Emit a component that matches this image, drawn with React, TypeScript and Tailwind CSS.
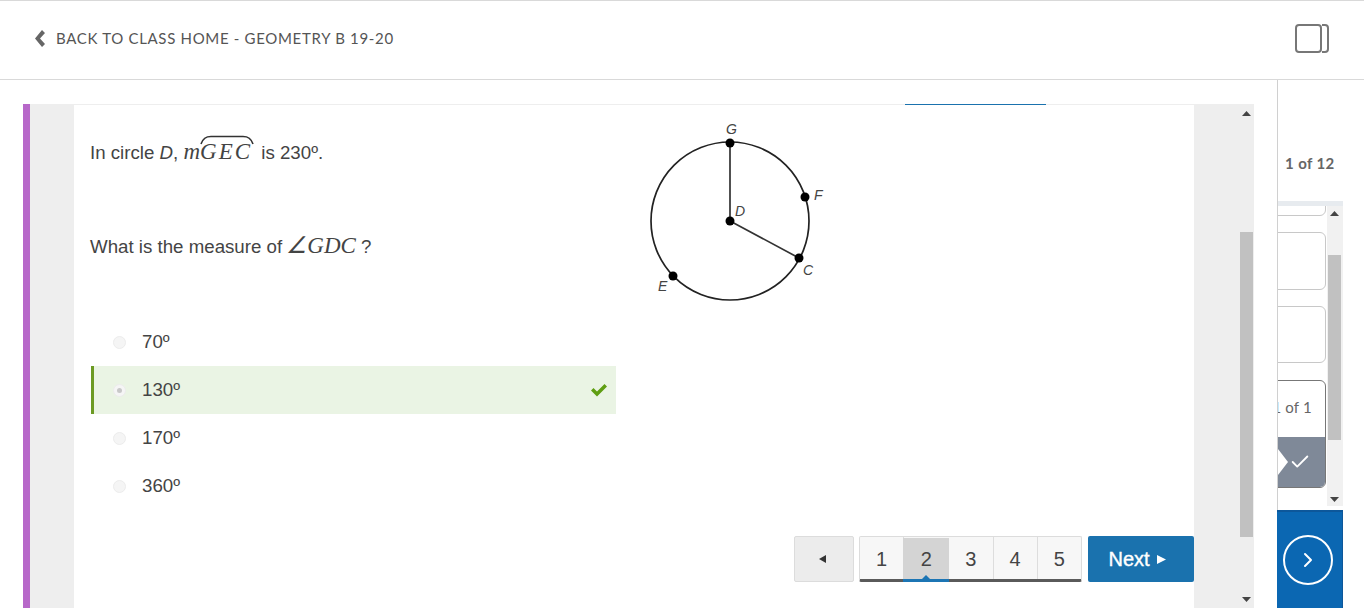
import { Check, ChevronRight } from 'lucide-react';
import React from 'react';

const options = [
  { label: '70º', correct: false },
  { label: '130º', correct: true },
  { label: '170º', correct: false },
  { label: '360º', correct: false },
];

const pages = ['1', '2', '3', '4', '5'];

function Figure() {
  return (
    <svg width="210" height="210" viewBox="0 0 210 210" className="shrink-0">
      <circle cx="100" cy="121" r="79" fill="none" stroke="#222" strokeWidth="1.7" />
      <path d="M100 43V121L169 158" fill="none" stroke="#333" strokeWidth="1.7" />
      <circle cx="100" cy="43" r="4.5" fill="#000" />
      <circle cx="175" cy="97" r="4.5" fill="#000" />
      <circle cx="100" cy="121" r="4.5" fill="#000" />
      <circle cx="169" cy="158" r="4.5" fill="#000" />
      <circle cx="43" cy="176" r="4.5" fill="#000" />
      <g fontFamily="Liberation Sans" fontStyle="italic" fontSize="14" fill="#444">
        <text x="96" y="34">G</text>
        <text x="184" y="100">F</text>
        <text x="105" y="116">D</text>
        <text x="173" y="175">C</text>
        <text x="28" y="191">E</text>
      </g>
    </svg>
  );
}

function ScrollArrow({ up }: { up?: boolean }) {
  return (
    <svg width="9" height="5" viewBox="0 0 9 5">
      <path d={up ? 'M4.5 0L9 5H0Z' : 'M0 0H9L4.5 5Z'} fill="#444" />
    </svg>
  );
}

export default function App() {
  return (
    <div className="flex h-[608px] w-[1364px] flex-col overflow-hidden border-t border-[#d9d9d9] bg-white font-['Liberation_Sans',sans-serif] text-[#444]">
      {/* Top bar */}
      <header className="flex h-[79px] shrink-0 items-center justify-between border-b border-[#d9d9d9] pb-[4px] pl-[35px] pr-[35px]">
        <div className="flex items-center gap-[11px] font-['Lato',sans-serif] text-[15px] tracking-[0.68px] text-[#555]">
          <svg width="10" height="17" viewBox="0 0 10 17">
            <path d="M7 0L10 3L5 8.500L10 14L7 17L0 8.500Z" fill="#666" />
          </svg>
          <span>BACK TO CLASS HOME - GEOMETRY B 19-20</span>
        </div>
        <svg width="34" height="29" viewBox="0 0 34 29" className="mt-[1px]">
          <rect x="1" y="1" width="25" height="27" rx="3" fill="none" stroke="#777" strokeWidth="2" />
          <path d="M27 1H30A3 3 0 0 1 33 4V25A3 3 0 0 1 30 28H27" fill="none" stroke="#777" strokeWidth="2" />
        </svg>
      </header>

      <div className="flex min-h-0 flex-1">
        {/* Question area */}
        <main className="w-[1278px] shrink-0 border-r border-[#d0d0d0] pl-[23px] pr-[23px] pt-[24px]">
          <div className="flex h-[504px] border-l-[7px] border-[#b768c9] bg-[#eeeeee]">
            <div className="ml-[44px] w-[1120px] shrink-0 border-t border-[#eeeeee] bg-white">
              <div className="flex h-[212px]">
                <div className="w-[542px] shrink-0 pl-[16px] text-[18.7px] leading-[24px]">
                  <p className="mt-[35px] flex items-baseline">
                    <span>In circle&nbsp;</span>
                    <i>D</i>
                    <span>,&nbsp;</span>
                    <span className="font-['Liberation_Serif',serif] text-[23px] italic">m</span>
                    <span className="relative mr-[4px] font-['Liberation_Serif',serif] text-[23px] italic tracking-[2px]">
                      GEC
                      <svg width="54" height="10" viewBox="0 0 54 10" className="absolute left-[0px] top-[-5px]">
                        <path d="M1 9C3 3 6 1.500 11 1.500H43C48 1.500 51 3 53 9" fill="none" stroke="#333" strokeWidth="1.600" />
                      </svg>
                    </span>
                    <span>&nbsp;is 230º.</span>
                  </p>
                  <p className="mt-[69px] flex items-baseline">
                    <span>What is the measure of&nbsp;</span>
                    <span className="-ml-[1px] font-['Liberation_Serif',serif] text-[23px] italic">∠GDC</span>
                    <span>&nbsp;?</span>
                  </p>
                </div>
                <div className="-mr-[60px] -mt-[5px] pl-[14px]">
                  <Figure />
                </div>
              </div>

              <ul className="ml-[17px] mt-[1px] w-[525px] text-[18.7px]">
                {options.map((opt) => (
                  <li
                    key={opt.label}
                    className={
                      opt.correct
                        ? 'flex h-[48px] items-center border-l-[3px] border-[#6c9a23] bg-[#eaf4e4] pl-[19px] pr-[9px]'
                        : 'flex h-[48px] items-center border-l-[3px] border-transparent pl-[19px] pr-[9px]'
                    }
                  >
                    <span className="flex h-[13px] w-[13px] items-center justify-center rounded-full border border-[#ececec] bg-[#f5f5f5]">
                      {opt.correct && <span className="h-[5px] w-[5px] rounded-full bg-[#c8c8c8]" />}
                    </span>
                    <span className="ml-[16px] pt-[1px]">{opt.label}</span>
                    {opt.correct && (
                      <svg width="16" height="14" viewBox="0 0 16 14" className="ml-auto">
                        <path d="M0 7.500L2.500 5L6 8.500L13.500 1L16 3.500L6 13.500Z" fill="#5f9e12" />
                      </svg>
                    )}
                  </li>
                ))}
              </ul>

              <div className="mt-[26px] flex justify-end text-[20px]">
                <button className="flex h-[46px] w-[60px] items-center justify-center rounded-[2px] border border-[#dcdcdc] bg-[#ececec] pr-[3px]">
                  <svg width="7" height="8" viewBox="0 0 7 8">
                    <path d="M7 0V8L0 4Z" fill="#333" />
                  </svg>
                </button>
                <div className="ml-[5px] flex h-[46px] w-[223px] rounded-[2px] border border-b-[3px] border-[#dcdcdc] border-b-[#5a5a5a] bg-[#f7f7f7]">
                  {pages.map((p) => (
                    <div
                      key={p}
                      className={
                        p === '2'
                          ? 'relative -mb-[3px] -ml-[1px] mt-[1px] flex w-[46px] items-center justify-center border-b-[3px] border-[#1c75b4] bg-[#d4d4d4] pt-[1px]'
                          : 'flex flex-1 items-center justify-center border-r border-[#dddddd] pt-[1px] last:border-r-0'
                      }
                    >
                      {p}
                      {p === '2' && (
                        <span className="absolute bottom-0 left-[19px] h-0 w-0 border-x-[4px] border-b-[4px] border-x-transparent border-b-[#1c75b4]" />
                      )}
                    </div>
                  ))}
                </div>
                <button className="ml-[6px] flex h-[46px] w-[106px] items-center justify-center gap-[7px] rounded-[2px] bg-[#1a72ae] pr-[8px] text-white [-webkit-text-stroke:0.4px_#fff]">
                  Next
                  <svg width="9" height="9" viewBox="0 0 9 9">
                    <path d="M0 0L9 4.500L0 9Z" fill="#fff" />
                  </svg>
                </button>
              </div>
            </div>

            {/* Panel scrollbar */}
            <div className="ml-[45px] flex w-[14px] shrink-0 flex-col items-center justify-between pb-[6px] pt-[7px]">
              <ScrollArrow up />
              <ScrollArrow />
            </div>
          </div>
        </main>

        {/* Question list rail */}
        <aside className="flex w-[65px] shrink-0 flex-col">
          <div className="flex h-[121px] shrink-0 items-center pl-[7px] pt-[45px] font-['Lato',sans-serif] text-[15px] font-bold tracking-[0.4px] text-[#666]">
            1 of 12
          </div>
          <div className="flex h-[305px] shrink-0 overflow-hidden border-t-[5px] border-[#e7ebef]">
            <div className="flex w-[49px] shrink-0 flex-col overflow-hidden pr-[1px]">
              <div className="-ml-[10px] -mt-[20px] h-[30px] shrink-0 rounded-[6px] border border-[#c8c8c8] bg-white" />
              <div className="-ml-[10px] mt-[16px] h-[58px] shrink-0 rounded-[6px] border border-[#c8c8c8] bg-white" />
              <div className="-ml-[10px] mt-[16px] h-[57px] shrink-0 rounded-[6px] border border-[#c8c8c8] bg-white" />
              <div className="-ml-[10px] mt-[17px] h-[108px] shrink-0 overflow-hidden rounded-[6px] border border-[#777] bg-white">
                <div className="flex h-[56px] items-center justify-end pb-[3px] pr-[13px] font-['Lato',sans-serif] text-[15px] tracking-[0.2px] text-[#666]">
                  1 of 1
                </div>
                <div className="flex h-[51px] items-center justify-center bg-[#7f8998] pb-[2px] pl-[6px]">
                  <Check size={22} strokeWidth={2} className="text-white" />
                </div>
              </div>
            </div>
            <div className="flex w-[16px] shrink-0 flex-col items-center justify-between bg-[#f1f1f1] pb-[4px] pr-[1px] pt-[5px]">
              <ScrollArrow up />
              <ScrollArrow />
            </div>
          </div>
          <div className="-ml-[1px] mt-[4px] flex flex-1 items-center justify-center border-r border-t-2 border-[#0d579a] bg-[#0b67b2] pr-[4px]">
            <span className="flex h-[50px] w-[50px] items-center justify-center rounded-full border-2 border-white">
              <ChevronRight size={24} strokeWidth={2} className="text-white" />
            </span>
          </div>
        </aside>
      </div>

      {/* Scrollbar thumbs and the clipped pieces that sit on top of the panels */}
      <div className="absolute left-[905px] top-[104px] h-[1px] w-[141px] bg-[#1a72ae]" />
      <div className="absolute left-[1240px] top-[232px] h-[305px] w-[13px] bg-[#c1c1c1]" />
      <div className="absolute left-[1328px] top-[255px] h-[185px] w-[13px] bg-[#c1c1c1]" />
      <div className="absolute left-[1278px] top-[449px] h-0 w-0 border-y-[13px] border-l-[10px] border-y-transparent border-l-white" />
    </div>
  );
}
